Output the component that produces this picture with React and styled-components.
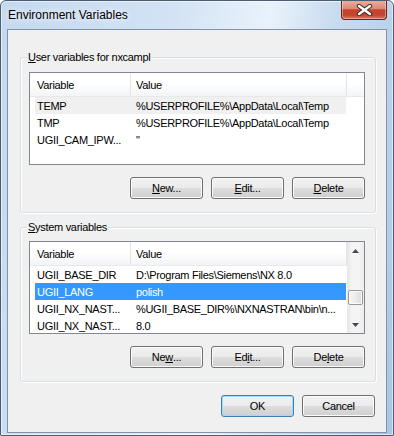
import React from 'react';
import styled, { createGlobalStyle } from 'styled-components';

const Global = createGlobalStyle`
  html, body { margin: 0; padding: 0; background: #ffffff; }
  body { font-family: "Liberation Sans", Arial, sans-serif; }
`;

const Window = styled.div`
  box-sizing: border-box;
  width: 394px;
  height: 436px;
  display: flex;
  flex-direction: column;
  border: 1px solid #4b5d73;
  border-radius: 6px 6px 1px 1px;
  background: linear-gradient(100deg, #c4d9ef 0%, #d3e3f5 38%, #e9f2fb 58%, #c9dbef 72%, #a9c6e6 100%);
  box-shadow: inset 0 0 0 1px rgba(255, 255, 255, 0.55);
  padding: 0 6px 2px 6px;
  overflow: hidden;
`;

const TitleBar = styled.div`
  height: 28px;
  display: flex;
  align-items: center;
  flex-shrink: 0;
`;

const Title = styled.div`
  font-family: "Liberation Sans", Arial, sans-serif;
  font-size: 12px;
  color: #000;
  padding-left: 1px;
  text-shadow: 0 0 6px rgba(255, 255, 255, 0.95), 0 0 10px rgba(255, 255, 255, 0.8);
`;

const CloseButton = styled.div`
  margin-left: auto;
  align-self: flex-start;
  margin-top: -1px;
  width: 46px;
  height: 20px;
  box-sizing: border-box;
  border: 1px solid #6a2418;
  border-top: none;
  border-radius: 0 0 4px 4px;
  background: linear-gradient(#eab0a2 0%, #dc8a77 45%, #c8412c 52%, #c24632 80%, #de7a5e 100%);
  box-shadow: inset 0 0 0 1px rgba(255, 255, 255, 0.35);
  display: flex;
  align-items: center;
  justify-content: center;
`;

const Client = styled.div`
  flex: 1;
  display: flex;
  flex-direction: column;
  background: #f0f0f0;
  border: 1px solid #8093ab;
`;

const GroupBox = styled.div`
  position: relative;
  margin: ${(p) => p.$top}px 10px 0 12px;
  padding: ${(p) => p.$padTop}px 10px 13px 8px;
  border: 1px solid #d5dfe5;
  border-radius: 3px;
  box-shadow: inset 1px 1px 0 #ffffff, 1px 1px 0 #ffffff;
`;

const Caption = styled.div`
  position: absolute;
  top: -7px;
  left: 6px;
  padding: 0 1px;
  background: #f0f0f0;
  font-size: 11px;
  line-height: 13px;
  letter-spacing: -0.3px;
  color: #000;
`;

const ListBox = styled.div`
  box-sizing: border-box;
  width: 336px;
  height: 93px;
  border: 1px solid #828790;
  background: #ffffff;
  display: flex;
  overflow: hidden;
`;

const ListPane = styled.div`
  flex: 1;
  min-width: 0;
  display: flex;
  flex-direction: column;
`;

const Header = styled.div`
  display: flex;
  height: 24px;
  box-sizing: border-box;
  flex-shrink: 0;
  background: linear-gradient(#ffffff 0%, #ffffff 45%, #f3f4f6 100%);
  border-bottom: 1px solid #e8e8e8;
`;

const HeaderCell = styled.div`
  box-sizing: border-box;
  width: ${(p) => p.$w}px;
  flex-shrink: 0;
  padding-left: ${(p) => p.$pad}px;
  border-right: 1px solid #e3e3e3;
  display: flex;
  align-items: center;
  font-size: 11px;
  letter-spacing: -0.3px;
  color: #000;
`;

const Row = styled.div`
  display: flex;
  align-items: center;
  height: 17px;
  width: 311px;
  margin-left: 5px;
  flex-shrink: 0;
  font-size: 11px;
  letter-spacing: -0.3px;
  white-space: nowrap;
  background: ${(p) => (p.$state === 'active' ? '#3399ff' : p.$state === 'inactive' ? '#f0f0f0' : 'transparent')};
  color: ${(p) => (p.$state === 'active' ? '#ffffff' : '#000000')};
`;

const NameCell = styled.div`
  box-sizing: border-box;
  width: 96px;
  flex-shrink: 0;
  padding-left: 2px;
  overflow: hidden;
`;

const ValueCell = styled.div`
  flex: 1;
  padding-left: 5px;
  overflow: hidden;
`;

const ScrollBar = styled.div`
  width: 17px;
  flex-shrink: 0;
  display: flex;
  flex-direction: column;
  background: linear-gradient(to right, #e6e6e6 0%, #f4f4f4 30%, #f4f4f4 70%, #ececec 100%);
`;

const ScrollArrow = styled.div`
  height: 17px;
  flex-shrink: 0;
  display: flex;
  align-items: center;
  justify-content: center;
`;

const ScrollTrack = styled.div`
  flex: 1;
  display: flex;
  flex-direction: column;
  align-items: center;
`;

const Thumb = styled.div`
  box-sizing: border-box;
  width: 15px;
  height: 15px;
  margin-top: 31px;
  border: 1px solid #9a9a9a;
  border-radius: 2px;
  background: linear-gradient(to right, #f7f7f7 0%, #ececec 50%, #dcdcdc 100%);
  box-shadow: inset 0 0 0 1px #fbfbfb;
`;

const ButtonRow = styled.div`
  display: flex;
  justify-content: flex-end;
  gap: 8px;
  margin: ${(p) => p.$mt}px ${(p) => p.$mr}px 0 0;
`;

const Button = styled.div`
  box-sizing: border-box;
  width: 73px;
  height: 22px;
  border: 1px solid ${(p) => (p.$default ? '#3c7fb1' : '#707070')};
  border-radius: 3px;
  background: linear-gradient(#f2f2f2 0%, #ebebeb 48%, #dddddd 52%, #cfcfcf 100%);
  box-shadow: inset 0 0 0 1px ${(p) => (p.$default ? '#9fdbf5' : '#fbfbfb')};
  display: flex;
  align-items: center;
  justify-content: center;
  font-size: 11px;
  letter-spacing: -0.3px;
  color: #000;
`;

const userVars = [
  { name: 'TEMP', value: '%USERPROFILE%\\AppData\\Local\\Temp', state: 'inactive' },
  { name: 'TMP', value: '%USERPROFILE%\\AppData\\Local\\Temp' },
  { name: 'UGII_CAM_IPW...', value: '"' },
];

const systemVars = [
  { name: 'UGII_BASE_DIR', value: 'D:\\Program Files\\Siemens\\NX 8.0' },
  { name: 'UGII_LANG', value: 'polish', state: 'active' },
  { name: 'UGII_NX_NAST...', value: '%UGII_BASE_DIR%\\NXNASTRAN\\bin\\n...' },
  { name: 'UGII_NX_NAST...', value: '8.0' },
];

function Rows({ items }) {
  return items.map((r, i) => (
    <Row key={i} $state={r.state}>
      <NameCell>{r.name}</NameCell>
      <ValueCell>{r.value}</ValueCell>
    </Row>
  ));
}

function ListHeader() {
  return (
    <Header>
      <HeaderCell $w={101} $pad={7}>Variable</HeaderCell>
      <HeaderCell $w={216} $pad={5}>Value</HeaderCell>
    </Header>
  );
}

const CloseX = () => (
  <svg width="17" height="12" viewBox="0 0 17 12">
    <path d="M3 2 L14 10 M14 2 L3 10" stroke="#3a2a28" strokeWidth="4.4" strokeLinecap="round" />
    <path d="M3 2 L14 10 M14 2 L3 10" stroke="#ffffff" strokeWidth="2.4" strokeLinecap="round" />
  </svg>
);

const UpArrow = () => (
  <svg width="7" height="4" viewBox="0 0 7 4">
    <path d="M0 4 L3.5 0 L7 4 Z" fill="#4a4a4a" />
  </svg>
);

const DownArrow = () => (
  <svg width="7" height="4" viewBox="0 0 7 4">
    <path d="M0 0 L3.5 4 L7 0 Z" fill="#4a4a4a" />
  </svg>
);

export default function App() {
  return (
    <>
      <Global />
      <Window>
        <TitleBar>
          <Title>Environment Variables</Title>
          <CloseButton>
            <CloseX />
          </CloseButton>
        </TitleBar>
        <Client>
          <GroupBox $top={27} $padTop={14}>
            <Caption>
              <u>U</u>ser variables for nxcampl
            </Caption>
            <ListBox>
              <ListPane>
                <ListHeader />
                <Rows items={userVars} />
              </ListPane>
            </ListBox>
            <ButtonRow $mt={12} $mr={0}>
              <Button>
                <u>N</u>ew...
              </Button>
              <Button>
                <u>E</u>dit...
              </Button>
              <Button>
                <u>D</u>elete
              </Button>
            </ButtonRow>
          </GroupBox>
          <GroupBox $top={14} $padTop={13}>
            <Caption>
              <u>S</u>ystem variables
            </Caption>
            <ListBox>
              <ListPane>
                <ListHeader />
                <Rows items={systemVars} />
              </ListPane>
              <ScrollBar>
                <ScrollArrow>
                  <UpArrow />
                </ScrollArrow>
                <ScrollTrack>
                  <Thumb />
                </ScrollTrack>
                <ScrollArrow>
                  <DownArrow />
                </ScrollArrow>
              </ScrollBar>
            </ListBox>
            <ButtonRow $mt={12} $mr={0}>
              <Button>
                Ne<u>w</u>...
              </Button>
              <Button>
                Ed<u>i</u>t...
              </Button>
              <Button>
                De<u>l</u>ete
              </Button>
            </ButtonRow>
          </GroupBox>
          <ButtonRow $mt={13} $mr={11}>
            <Button $default>OK</Button>
            <Button>Cancel</Button>
          </ButtonRow>
        </Client>
      </Window>
    </>
  );
}
